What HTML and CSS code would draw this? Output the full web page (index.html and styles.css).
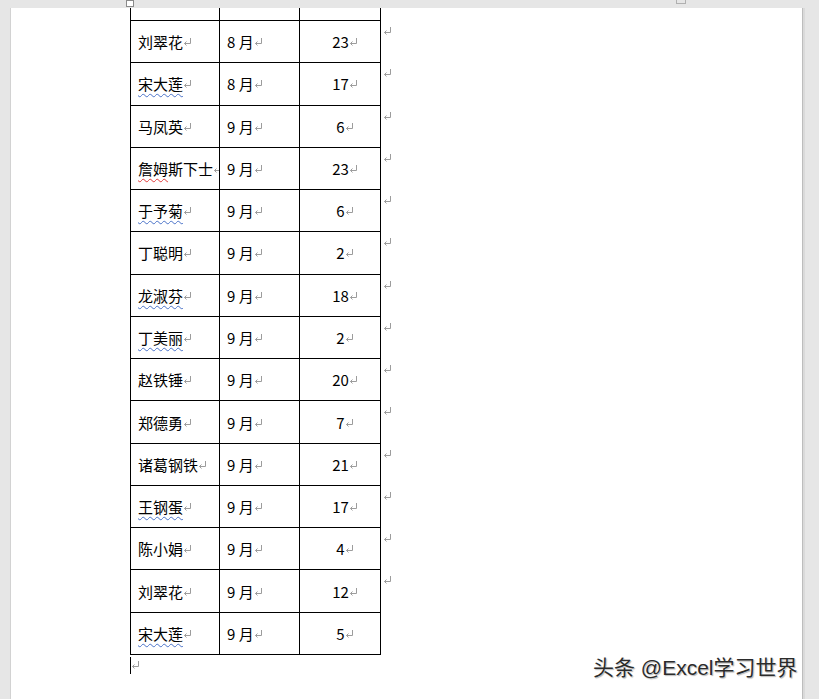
FILE: index.html
```html
<!DOCTYPE html>
<html>
<head>
<meta charset="utf-8">
<link rel="stylesheet" href="styles.css">
</head>
<body>
<div class="handle"></div>
<div class="handle2"></div>
<div class="page">
  <table class="tbl">
    <tr><td></td><td></td><td></td><td class="e"><svg class="pm" viewBox="0 0 9 8"><path d="M7.5 0V5.5H1.5M3.5 3.5L1.5 5.5L3.5 7.5"/></svg></td></tr>
    <tr><td>刘翠花<svg class="pm" viewBox="0 0 9 8"><path d="M7.5 0V5.5H1.5M3.5 3.5L1.5 5.5L3.5 7.5"/></svg></td><td>8 月<svg class="pm" viewBox="0 0 9 8"><path d="M7.5 0V5.5H1.5M3.5 3.5L1.5 5.5L3.5 7.5"/></svg></td><td>23<svg class="pm" viewBox="0 0 9 8"><path d="M7.5 0V5.5H1.5M3.5 3.5L1.5 5.5L3.5 7.5"/></svg></td><td class="e"><svg class="pm" viewBox="0 0 9 8"><path d="M7.5 0V5.5H1.5M3.5 3.5L1.5 5.5L3.5 7.5"/></svg></td></tr>
    <tr><td><span class="gb">宋大莲</span><svg class="pm" viewBox="0 0 9 8"><path d="M7.5 0V5.5H1.5M3.5 3.5L1.5 5.5L3.5 7.5"/></svg></td><td>8 月<svg class="pm" viewBox="0 0 9 8"><path d="M7.5 0V5.5H1.5M3.5 3.5L1.5 5.5L3.5 7.5"/></svg></td><td>17<svg class="pm" viewBox="0 0 9 8"><path d="M7.5 0V5.5H1.5M3.5 3.5L1.5 5.5L3.5 7.5"/></svg></td><td class="e"><svg class="pm" viewBox="0 0 9 8"><path d="M7.5 0V5.5H1.5M3.5 3.5L1.5 5.5L3.5 7.5"/></svg></td></tr>
    <tr><td>马凤英<svg class="pm" viewBox="0 0 9 8"><path d="M7.5 0V5.5H1.5M3.5 3.5L1.5 5.5L3.5 7.5"/></svg></td><td>9 月<svg class="pm" viewBox="0 0 9 8"><path d="M7.5 0V5.5H1.5M3.5 3.5L1.5 5.5L3.5 7.5"/></svg></td><td>6<svg class="pm" viewBox="0 0 9 8"><path d="M7.5 0V5.5H1.5M3.5 3.5L1.5 5.5L3.5 7.5"/></svg></td><td class="e"><svg class="pm" viewBox="0 0 9 8"><path d="M7.5 0V5.5H1.5M3.5 3.5L1.5 5.5L3.5 7.5"/></svg></td></tr>
    <tr><td><span class="sr">詹姆</span>斯下士<svg class="pm" viewBox="0 0 9 8"><path d="M7.5 0V5.5H1.5M3.5 3.5L1.5 5.5L3.5 7.5"/></svg></td><td>9 月<svg class="pm" viewBox="0 0 9 8"><path d="M7.5 0V5.5H1.5M3.5 3.5L1.5 5.5L3.5 7.5"/></svg></td><td>23<svg class="pm" viewBox="0 0 9 8"><path d="M7.5 0V5.5H1.5M3.5 3.5L1.5 5.5L3.5 7.5"/></svg></td><td class="e"><svg class="pm" viewBox="0 0 9 8"><path d="M7.5 0V5.5H1.5M3.5 3.5L1.5 5.5L3.5 7.5"/></svg></td></tr>
    <tr><td><span class="gb">于予菊</span><svg class="pm" viewBox="0 0 9 8"><path d="M7.5 0V5.5H1.5M3.5 3.5L1.5 5.5L3.5 7.5"/></svg></td><td>9 月<svg class="pm" viewBox="0 0 9 8"><path d="M7.5 0V5.5H1.5M3.5 3.5L1.5 5.5L3.5 7.5"/></svg></td><td>6<svg class="pm" viewBox="0 0 9 8"><path d="M7.5 0V5.5H1.5M3.5 3.5L1.5 5.5L3.5 7.5"/></svg></td><td class="e"><svg class="pm" viewBox="0 0 9 8"><path d="M7.5 0V5.5H1.5M3.5 3.5L1.5 5.5L3.5 7.5"/></svg></td></tr>
    <tr><td>丁聪明<svg class="pm" viewBox="0 0 9 8"><path d="M7.5 0V5.5H1.5M3.5 3.5L1.5 5.5L3.5 7.5"/></svg></td><td>9 月<svg class="pm" viewBox="0 0 9 8"><path d="M7.5 0V5.5H1.5M3.5 3.5L1.5 5.5L3.5 7.5"/></svg></td><td>2<svg class="pm" viewBox="0 0 9 8"><path d="M7.5 0V5.5H1.5M3.5 3.5L1.5 5.5L3.5 7.5"/></svg></td><td class="e"><svg class="pm" viewBox="0 0 9 8"><path d="M7.5 0V5.5H1.5M3.5 3.5L1.5 5.5L3.5 7.5"/></svg></td></tr>
    <tr><td><span class="gb">龙淑芬</span><svg class="pm" viewBox="0 0 9 8"><path d="M7.5 0V5.5H1.5M3.5 3.5L1.5 5.5L3.5 7.5"/></svg></td><td>9 月<svg class="pm" viewBox="0 0 9 8"><path d="M7.5 0V5.5H1.5M3.5 3.5L1.5 5.5L3.5 7.5"/></svg></td><td>18<svg class="pm" viewBox="0 0 9 8"><path d="M7.5 0V5.5H1.5M3.5 3.5L1.5 5.5L3.5 7.5"/></svg></td><td class="e"><svg class="pm" viewBox="0 0 9 8"><path d="M7.5 0V5.5H1.5M3.5 3.5L1.5 5.5L3.5 7.5"/></svg></td></tr>
    <tr><td><span class="gb">丁美丽</span><svg class="pm" viewBox="0 0 9 8"><path d="M7.5 0V5.5H1.5M3.5 3.5L1.5 5.5L3.5 7.5"/></svg></td><td>9 月<svg class="pm" viewBox="0 0 9 8"><path d="M7.5 0V5.5H1.5M3.5 3.5L1.5 5.5L3.5 7.5"/></svg></td><td>2<svg class="pm" viewBox="0 0 9 8"><path d="M7.5 0V5.5H1.5M3.5 3.5L1.5 5.5L3.5 7.5"/></svg></td><td class="e"><svg class="pm" viewBox="0 0 9 8"><path d="M7.5 0V5.5H1.5M3.5 3.5L1.5 5.5L3.5 7.5"/></svg></td></tr>
    <tr><td>赵铁锤<svg class="pm" viewBox="0 0 9 8"><path d="M7.5 0V5.5H1.5M3.5 3.5L1.5 5.5L3.5 7.5"/></svg></td><td>9 月<svg class="pm" viewBox="0 0 9 8"><path d="M7.5 0V5.5H1.5M3.5 3.5L1.5 5.5L3.5 7.5"/></svg></td><td>20<svg class="pm" viewBox="0 0 9 8"><path d="M7.5 0V5.5H1.5M3.5 3.5L1.5 5.5L3.5 7.5"/></svg></td><td class="e"><svg class="pm" viewBox="0 0 9 8"><path d="M7.5 0V5.5H1.5M3.5 3.5L1.5 5.5L3.5 7.5"/></svg></td></tr>
    <tr><td>郑德勇<svg class="pm" viewBox="0 0 9 8"><path d="M7.5 0V5.5H1.5M3.5 3.5L1.5 5.5L3.5 7.5"/></svg></td><td>9 月<svg class="pm" viewBox="0 0 9 8"><path d="M7.5 0V5.5H1.5M3.5 3.5L1.5 5.5L3.5 7.5"/></svg></td><td>7<svg class="pm" viewBox="0 0 9 8"><path d="M7.5 0V5.5H1.5M3.5 3.5L1.5 5.5L3.5 7.5"/></svg></td><td class="e"><svg class="pm" viewBox="0 0 9 8"><path d="M7.5 0V5.5H1.5M3.5 3.5L1.5 5.5L3.5 7.5"/></svg></td></tr>
    <tr><td>诸葛钢铁<svg class="pm" viewBox="0 0 9 8"><path d="M7.5 0V5.5H1.5M3.5 3.5L1.5 5.5L3.5 7.5"/></svg></td><td>9 月<svg class="pm" viewBox="0 0 9 8"><path d="M7.5 0V5.5H1.5M3.5 3.5L1.5 5.5L3.5 7.5"/></svg></td><td>21<svg class="pm" viewBox="0 0 9 8"><path d="M7.5 0V5.5H1.5M3.5 3.5L1.5 5.5L3.5 7.5"/></svg></td><td class="e"><svg class="pm" viewBox="0 0 9 8"><path d="M7.5 0V5.5H1.5M3.5 3.5L1.5 5.5L3.5 7.5"/></svg></td></tr>
    <tr><td><span class="gb">王钢蛋</span><svg class="pm" viewBox="0 0 9 8"><path d="M7.5 0V5.5H1.5M3.5 3.5L1.5 5.5L3.5 7.5"/></svg></td><td>9 月<svg class="pm" viewBox="0 0 9 8"><path d="M7.5 0V5.5H1.5M3.5 3.5L1.5 5.5L3.5 7.5"/></svg></td><td>17<svg class="pm" viewBox="0 0 9 8"><path d="M7.5 0V5.5H1.5M3.5 3.5L1.5 5.5L3.5 7.5"/></svg></td><td class="e"><svg class="pm" viewBox="0 0 9 8"><path d="M7.5 0V5.5H1.5M3.5 3.5L1.5 5.5L3.5 7.5"/></svg></td></tr>
    <tr><td>陈小娟<svg class="pm" viewBox="0 0 9 8"><path d="M7.5 0V5.5H1.5M3.5 3.5L1.5 5.5L3.5 7.5"/></svg></td><td>9 月<svg class="pm" viewBox="0 0 9 8"><path d="M7.5 0V5.5H1.5M3.5 3.5L1.5 5.5L3.5 7.5"/></svg></td><td>4<svg class="pm" viewBox="0 0 9 8"><path d="M7.5 0V5.5H1.5M3.5 3.5L1.5 5.5L3.5 7.5"/></svg></td><td class="e"><svg class="pm" viewBox="0 0 9 8"><path d="M7.5 0V5.5H1.5M3.5 3.5L1.5 5.5L3.5 7.5"/></svg></td></tr>
    <tr><td>刘翠花<svg class="pm" viewBox="0 0 9 8"><path d="M7.5 0V5.5H1.5M3.5 3.5L1.5 5.5L3.5 7.5"/></svg></td><td>9 月<svg class="pm" viewBox="0 0 9 8"><path d="M7.5 0V5.5H1.5M3.5 3.5L1.5 5.5L3.5 7.5"/></svg></td><td>12<svg class="pm" viewBox="0 0 9 8"><path d="M7.5 0V5.5H1.5M3.5 3.5L1.5 5.5L3.5 7.5"/></svg></td><td class="e"><svg class="pm" viewBox="0 0 9 8"><path d="M7.5 0V5.5H1.5M3.5 3.5L1.5 5.5L3.5 7.5"/></svg></td></tr>
    <tr><td><span class="gb">宋大莲</span><svg class="pm" viewBox="0 0 9 8"><path d="M7.5 0V5.5H1.5M3.5 3.5L1.5 5.5L3.5 7.5"/></svg></td><td>9 月<svg class="pm" viewBox="0 0 9 8"><path d="M7.5 0V5.5H1.5M3.5 3.5L1.5 5.5L3.5 7.5"/></svg></td><td>5<svg class="pm" viewBox="0 0 9 8"><path d="M7.5 0V5.5H1.5M3.5 3.5L1.5 5.5L3.5 7.5"/></svg></td><td class="e"></td></tr>
  </table>
  <div class="last"><span class="caret"></span><svg class="pm" viewBox="0 0 9 8"><path d="M7.5 0V5.5H1.5M3.5 3.5L1.5 5.5L3.5 7.5"/></svg></div>
</div>
<div class="wm">头条 @Excel学习世界</div>
</body>
</html>
```

FILE: styles.css
```css
html, body {
  margin: 0;
  padding: 0;
}
body {
  width: 819px;
  height: 699px;
  overflow: hidden;
  background: #e6e6e6;
  padding-top: 8px;
  box-sizing: border-box;
  position: relative;
  font-family: "Noto Sans CJK SC", "Noto Sans", sans-serif;
  color: #000;
}
.page {
  margin-left: 10px;
  width: 672px;
  height: 691px;
  background: #fff;
  border-left: 1px solid #d2d2d2;
  border-right: 1px solid #bdbdbd;
  box-shadow: 2px 0 0 #dadada;
  overflow: hidden;
  padding-left: 119px;
  box-sizing: content-box;
}
.tbl {
  border-collapse: separate;
  border-spacing: 0;
  table-layout: fixed;
  width: 291px;
  margin-top: -29.27px;
  font-size: 15px;
}
.tbl tr {
  height: 42.27px;
}
.tbl td {
  box-sizing: border-box;
  border-right: 1px solid #000;
  border-bottom: 1px solid #000;
  padding: 1px 0 0 7px;
  white-space: nowrap;
  overflow: hidden;
  vertical-align: middle;
  line-height: 20px;
}
.tbl td:nth-child(1) {
  width: 90px;
  border-left: 1px solid #000;
}
.tbl td:nth-child(2) {
  width: 80px;
}
.tbl td:nth-child(3) {
  width: 81px;
  text-align: center;
  padding-left: 16px;
  padding-right: 6px;
}
.tbl td.e {
  width: 40px;
  border: none;
  vertical-align: top;
  padding: 6px 0 0 2px;
}
.pm {
  width: 9px;
  height: 8px;
  fill: none;
  stroke: #9c9c9c;
  stroke-width: 1;
  vertical-align: 2px;
}
.e .pm {
  display: block;
}
.gb {
  text-decoration: underline wavy #4a72c8;
  text-decoration-thickness: 1px;
  text-underline-offset: 3px;
}
.sr {
  text-decoration: underline wavy #e23a3a;
  text-decoration-thickness: 1px;
  text-underline-offset: 3px;
}
.last {
  display: flex;
  align-items: flex-start;
  margin-top: 2px;
  height: 18px;
}
.caret {
  width: 1px;
  height: 17px;
  background: #000;
}
.last .pm {
  margin-top: 4px;
}
.handle {
  position: absolute;
  left: 126px;
  top: 0;
  width: 6px;
  height: 5px;
  border: 1px solid #8a8a8a;
  background: #fff;
}
.handle2 {
  position: absolute;
  left: 676px;
  top: -3px;
  width: 8px;
  height: 5px;
  border: 1px solid #b0b0b0;
  background: #e6e6e6;
}
.wm {
  position: absolute;
  left: 593px;
  top: 653px;
  font-family: "Liberation Sans", "Noto Sans CJK SC", sans-serif;
  font-size: 21px;
  line-height: 30px;
  color: #2b2b2b;
  white-space: nowrap;
  text-shadow: 0 0 2px #fff, 1px 1px 1px rgba(0,0,0,0.35);
}
```
